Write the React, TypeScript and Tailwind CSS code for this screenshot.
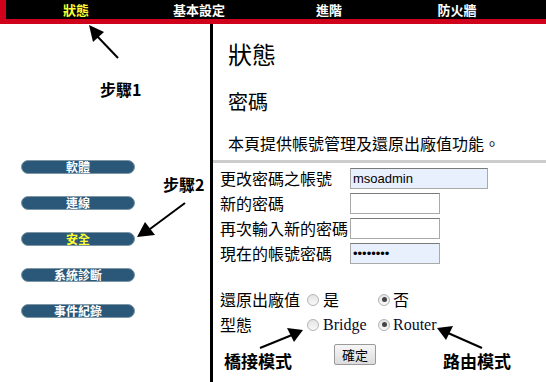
const cjk = { fontFamily: '"Noto Sans CJK TC", "Noto Sans", sans-serif' };
const serif = { fontFamily: '"Liberation Serif", "Noto Sans CJK TC", serif' };

const topNav = [
  { label: "狀態", w: "w-[140px]", active: true },
  { label: "基本設定", w: "w-[106px]", active: false },
  { label: "進階", w: "w-[154px]", active: false },
  { label: "防火牆", w: "w-[102px]", active: false },
];

const sideNav = [
  { label: "軟體", active: false },
  { label: "連線", active: false },
  { label: "安全", active: true },
  { label: "系統診斷", active: false },
  { label: "事件紀錄", active: false },
];

function Radio({ checked }: { checked?: boolean }) {
  return (
    <span className="inline-flex h-[12px] w-[12px] items-center justify-center rounded-full border border-[#b4b4b4] bg-gradient-to-b from-[#e4e4e4] to-[#f8f8f8]">
      {checked && <span className="h-[5px] w-[5px] rounded-full bg-[#444]" />}
    </span>
  );
}

function Field({ width, value, filled }: { width: string; value?: string; filled?: boolean }) {
  return (
    <div
      className={`flex h-[21px] items-center border border-[#a9a9a9] border-t-[#7a7a7a] px-[2px] text-[13px] ${width} ${
        filled ? "bg-[#e8f0fe]" : "bg-white"
      }`}
      style={{ fontFamily: '"Liberation Sans", sans-serif' }}
    >
      {value}
    </div>
  );
}

export default function App() {
  return (
    <div className="relative h-[382px] w-[546px] overflow-hidden bg-white text-black" style={cjk}>
      {/* top menu */}
      <div className="flex h-[24px] border-b-[5px] border-l-[6px] border-[#d0021b] bg-black">
        {topNav.map((n) => (
          <div
            key={n.label}
            className={`${n.w} text-center text-[13px] font-bold leading-[19px] ${
              n.active ? "text-[#ffff33]" : "text-white"
            }`}
          >
            {n.label}
          </div>
        ))}
      </div>

      <div className="flex h-[358px]">
        {/* side menu */}
        <div className="w-[213px] border-r-[3px] border-black pt-[136px]">
          <div className="flex flex-col gap-[22px] pl-[21px]">
            {sideNav.map((s) => (
              <div
                key={s.label}
                className={`flex h-[14px] w-[114px] items-center justify-center rounded-full border border-[#7d98a4] bg-[#2b5779] text-[12px] font-bold leading-none ${
                  s.active ? "text-[#ffff33]" : "text-white"
                }`}
              >
                {s.label}
              </div>
            ))}
          </div>
        </div>

        {/* content */}
        <div className="flex-1">
          <div className="pl-[15px]">
            <h1 className="mt-[16px] text-[24px] leading-[28px]">狀態</h1>
            <h2 className="mt-[22px] text-[20px] leading-[24px]">密碼</h2>
            <p className="mt-[19px] text-[16px] leading-[20px]">本頁提供帳號管理及還原出廠值功能。</p>
          </div>
          <div className="mt-[7px] h-[3px] bg-[#cccccc]" />

          <div className="mt-[5px] flex flex-col gap-[4px] pl-[7px] text-[16px] leading-[21px]">
            <div className="flex">
              <span className="w-[130px]">更改密碼之帳號</span>
              <Field width="w-[138px]" value="msoadmin" filled />
            </div>
            <div className="flex">
              <span className="w-[130px]">新的密碼</span>
              <Field width="w-[90px]" />
            </div>
            <div className="flex">
              <span className="w-[130px]">再次輸入新的密碼</span>
              <Field width="w-[90px]" />
            </div>
            <div className="flex">
              <span className="w-[130px]">現在的帳號密碼</span>
              <Field width="w-[90px]" value="••••••••" filled />
            </div>
          </div>

          <div className="mt-[25px] flex flex-col gap-[4px] pl-[7px] text-[16px] leading-[21px]">
            <div className="flex items-center">
              <span className="w-[87px]">還原出廠值</span>
              <Radio />
              <span className="ml-[4px] w-[55px]">是</span>
              <Radio checked />
              <span className="ml-[3px]">否</span>
            </div>
            <div className="flex items-center">
              <span className="w-[87px]">型態</span>
              <Radio />
              <span className="ml-[4px] w-[55px] text-[#0a0a2a]" style={serif}>
                Bridge
              </span>
              <Radio checked />
              <span className="ml-[3px] text-[#0a0a2a]" style={serif}>
                Router
              </span>
            </div>
          </div>

          <div className="mt-[6px] pl-[121px]">
            <button className="h-[21px] w-[42px] rounded-[2px] border border-[#9a9a9a] bg-gradient-to-b from-[#f6f6f6] to-[#dcdcdc] text-[13px] leading-none">
              確定
            </button>
          </div>
        </div>
      </div>

      {/* annotations */}
      <svg className="pointer-events-none absolute left-0 top-0" width="546" height="382">
        <g stroke="#000" strokeWidth="2">
          <line x1="118" y1="58" x2="97" y2="36" />
          <line x1="185" y1="203" x2="150" y2="229" />
          <line x1="260" y1="348" x2="292" y2="335" />
          <line x1="482" y1="348" x2="448" y2="333" />
        </g>
        <g fill="#000">
          <polygon points="89,25 104,32 93,42" />
          <polygon points="137,237 145,222 155,235" />
          <polygon points="303,330 287,328 294,342" />
          <polygon points="437,328 453,326 446,340" />
        </g>
      </svg>
      <span className="absolute left-[100px] top-[79px] text-[16px] font-bold leading-[20px]">步驟1</span>
      <span className="absolute left-[163px] top-[174px] text-[16px] font-bold leading-[20px]">步驟2</span>
      <span className="absolute left-[224px] top-[351px] text-[17px] font-bold leading-[20px]">橋接模式</span>
      <span className="absolute left-[443px] top-[351px] text-[17px] font-bold leading-[20px]">路由模式</span>
    </div>
  );
}
